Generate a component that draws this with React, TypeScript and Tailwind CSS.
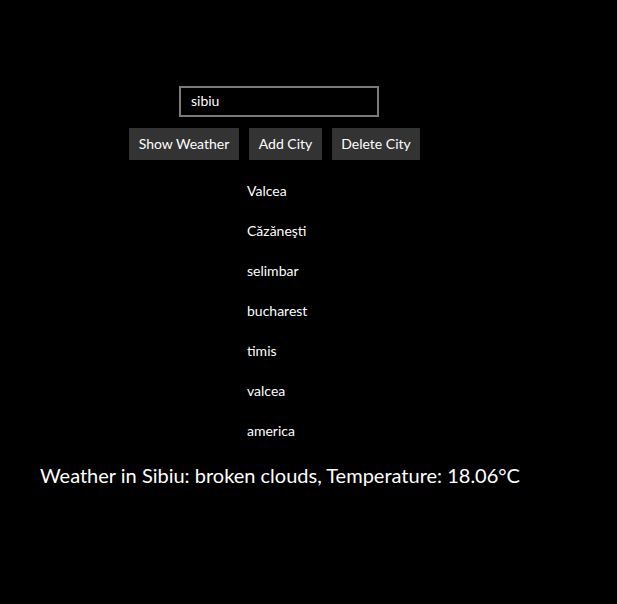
export default function App() {
  const cities = ["Valcea", "Căzăneşti", "selimbar", "bucharest", "timis", "valcea", "america"];
  return (
    <div className="w-[617px] h-[604px] bg-black text-white overflow-hidden" style={{ fontFamily: 'Lato, "Open Sans", sans-serif' }}>
      <div className="flex flex-col">
        <div className="ml-[179px] mt-[86px] w-[200px] h-[31px] border-2 border-[#7a7a7a] flex items-center pl-[10px] pb-[1px] text-[14px] leading-none">
          sibiu
        </div>
        <div className="ml-[129px] mt-[11px] flex gap-[10px]">
          <button className="h-[32px] w-[110px] bg-[#333333] text-[14px] text-white pb-[1px]">Show Weather</button>
          <button className="h-[32px] w-[73px] bg-[#333333] text-[14px] text-white pb-[1px]">Add City</button>
          <button className="h-[32px] w-[88px] bg-[#333333] text-[14px] text-white pb-[1px]">Delete City</button>
        </div>
        <div className="ml-[247px] mt-[11px] flex flex-col">
          {cities.map((c) => (
            <div key={c} className="h-[40px] flex items-center text-[14px] pb-[1px]">{c}</div>
          ))}
        </div>
        <div className="ml-[40px] mt-[10px] h-[28px] flex items-center text-[20px] whitespace-nowrap">
          Weather in Sibiu: broken clouds, Temperature: 18.06°C
        </div>
      </div>
    </div>
  );
}
